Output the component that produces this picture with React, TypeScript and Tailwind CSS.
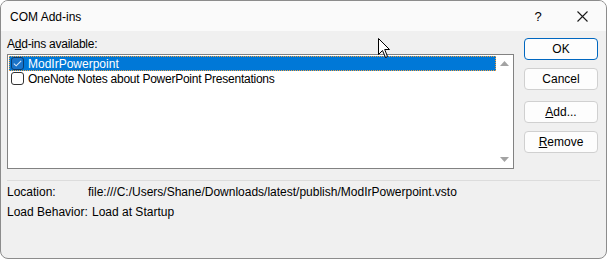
import React from "react";

const font = { fontFamily: '"Liberation Sans", Arial, sans-serif' };

function Btn({ children, primary }: { children: React.ReactNode; primary?: boolean }) {
  return (
    <div
      className={`h-[22px] w-[74px] flex items-center justify-center rounded-[4px] bg-[#fdfdfd] text-[12px] text-black border ${
        primary ? "border-[#0067c0]" : "border-[#d0d0d0]"
      }`}
    >
      {children}
    </div>
  );
}

function Tri({ up }: { up?: boolean }) {
  return (
    <svg width="9" height="5" viewBox="0 0 9 5">
      {up ? <polygon points="0,5 9,5 4.5,0" fill="#a3a3a3" /> : <polygon points="0,0 9,0 4.5,5" fill="#a3a3a3" />}
    </svg>
  );
}

export default function App() {
  return (
    <div className="w-[607px] h-[259px] bg-white" style={font}>
      <div className="relative w-[607px] h-[259px] rounded-[8px] border border-[#8c8c8c] bg-[#f0f0f0] overflow-hidden flex flex-col">
        {/* title bar */}
        <div className="h-[30px] bg-[#fafafa] flex items-center shrink-0 pt-[1px]">
          <div className="pl-[9px] text-[12px] text-black flex-1">COM Add-ins</div>
          <div className="text-[13px] text-black w-[14px] mr-[32px] text-center">?</div>
          <svg width="11" height="11" viewBox="0 0 11 11" className="mr-[18px]">
            <path d="M0.5 0.5 L10.5 10.5 M10.5 0.5 L0.5 10.5" stroke="#1a1a1a" strokeWidth="1.1" />
          </svg>
        </div>
        {/* body */}
        <div className="flex pl-[6px] pr-[8px]">
          <div className="w-[509px] flex flex-col">
            <div className="h-[16px] mt-[5px] text-[12px] leading-[16px] text-black tracking-[-0.25px]">
              A<span className="underline">d</span>d-ins available:
            </div>
            <div className="mt-[2px] h-[115px] border border-[#828282] bg-white flex">
              <div className="flex-1 pt-[1px] pl-[1px]">
                <div className="h-[15px] bg-[#0078d7] outline outline-1 outline-dotted outline-[#f0a040] -outline-offset-1 flex items-center">
                  <div className="ml-[2px] w-[13px] h-[13px] rounded-[3px] border border-[#0a3d70] bg-[#1a73c8] flex items-center justify-center">
                    <svg width="9" height="7" viewBox="0 0 9 7">
                      <path d="M0.8 3.6 L3.2 5.8 L8.2 0.8" stroke="#d6e6f7" strokeWidth="1.1" fill="none" />
                    </svg>
                  </div>
                  <span className="ml-[4px] text-[12px] text-white leading-none">ModIrPowerpoint</span>
                </div>
                <div className="h-[15px] flex items-center">
                  <div className="ml-[2px] w-[13px] h-[13px] rounded-[3px] border border-[#333333] bg-white" />
                  <span className="ml-[4px] text-[12px] text-black leading-none tracking-[-0.25px]">
                    OneNote Notes about PowerPoint Presentations
                  </span>
                </div>
              </div>
              <div className="w-[17px] flex flex-col items-center justify-between pt-[6px] pb-[6px]">
                <Tri up />
                <Tri />
              </div>
            </div>
          </div>
          <div className="ml-[10px] flex flex-col pt-[7px]">
            <Btn primary>OK</Btn>
            <div className="h-[8px]" />
            <Btn>Cancel</Btn>
            <div className="h-[11px]" />
            <Btn>
              <span className="underline">A</span>dd...
            </Btn>
            <div className="h-[8px]" />
            <Btn>
              <span className="underline">R</span>emove
            </Btn>
          </div>
        </div>
        <div className="mt-[11px] mx-[6px] h-px bg-[#dcdcdc]" />
        <div className="pl-[6px] mt-[1px] text-[12px] text-black">
          <div className="h-[20px] flex items-center">
            <span className="w-[81px]">Location:</span>
            <span>file:///C:/Users/Shane/Downloads/latest/publish/ModIrPowerpoint.vsto</span>
          </div>
          <div className="h-[20px] flex items-center">
            <span className="w-[85px]">Load Behavior:</span>
            <span>Load at Startup</span>
          </div>
        </div>
        {/* mouse cursor */}
        <svg className="absolute left-[377px] top-[37px]" width="13" height="21" viewBox="0 0 13 21">
          <path d="M0.5 0.5 L0.5 16.5 L4.5 12.5 L7.5 19.5 L9.5 18.5 L6.7 11.5 L11.5 11.5 Z" fill="white" stroke="black" strokeWidth="1" />
        </svg>
      </div>
    </div>
  );
}
